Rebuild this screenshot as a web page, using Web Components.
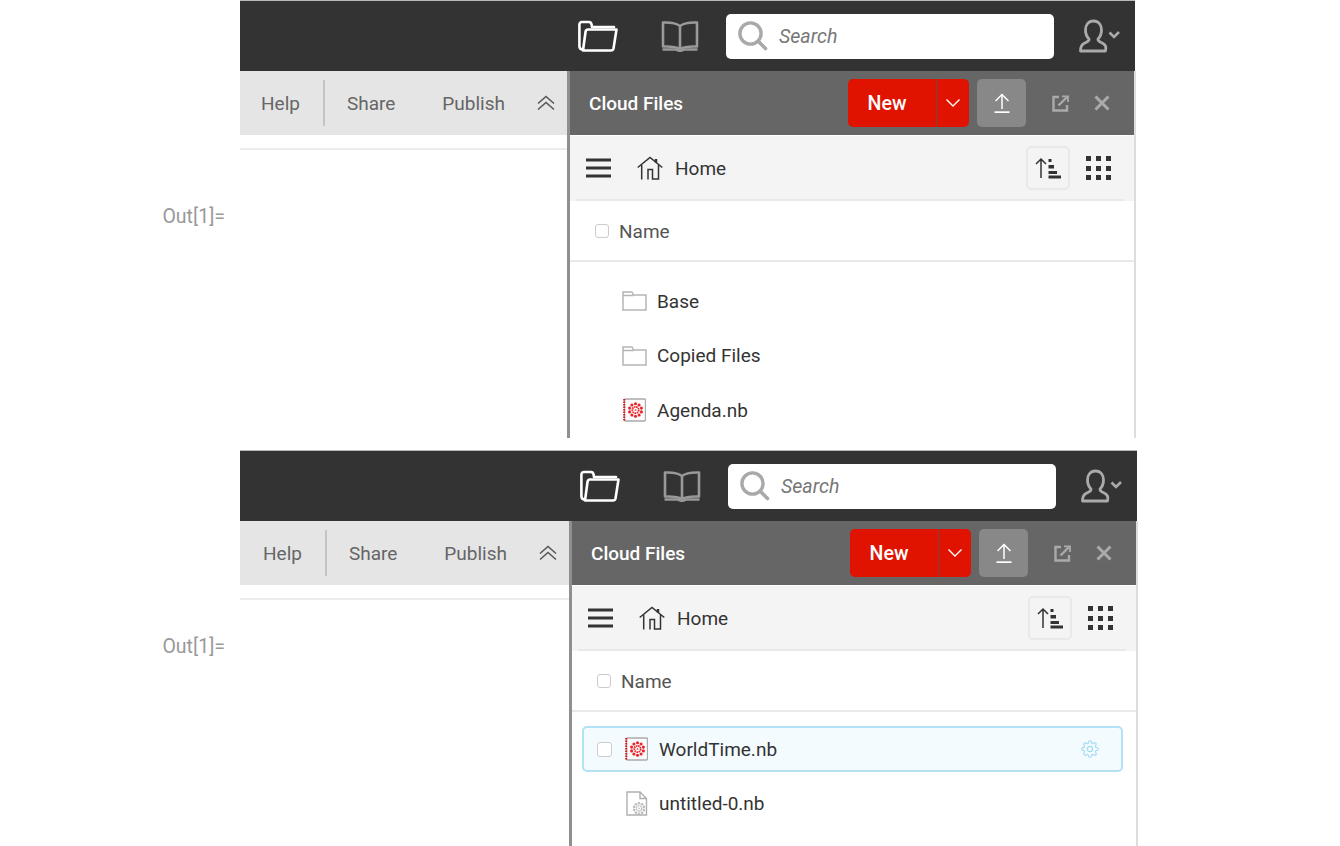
<!DOCTYPE html>
<html>
<head>
<meta charset="utf-8">
<title>Cloud Files</title>
<style>
  html, body { margin: 0; background: #fff; }
  body { font-family: Roboto, "Liberation Sans", sans-serif; }
  .stack { display: flex; flex-direction: column; gap: 12px; width: 1340px; height: 846px; overflow: hidden; }
</style>
</head>
<body>
<div class="stack">
  <wb-screen style="--total-w:1136px;--left-w:327px;--screen-h:438px;--out-top:205px;--list-top:16px">
    <wb-row-item kind="folder" label="Base"></wb-row-item>
    <wb-row-item kind="folder" label="Copied Files"></wb-row-item>
    <wb-row-item kind="notebook" label="Agenda.nb"></wb-row-item>
  </wb-screen>
  <wb-screen style="--total-w:1138px;--left-w:329px;--screen-h:396px;--out-top:185px;--list-top:14px">
    <wb-row-item kind="notebook" label="WorldTime.nb" selected></wb-row-item>
    <wb-row-item kind="draft" label="untitled-0.nb"></wb-row-item>
  </wb-screen>
</div>

<script>
// small base class: subclasses give html and css, shadow root gets filled once
class wbComponent extends HTMLElement {
  get html() { return `<slot></slot>`; }
  get css() { return `:host { display: block; }`; }

  constructor() {
    super();
    this.root = this.attachShadow({ mode: 'open' });
  }

  connectedCallback() {
    this.root.innerHTML = `<style>${this.css}</style>` + this.html;
  }
}

// the flake on notebook icons: a ring of petals round a broken inner ring
const flake = (cx, cy, r, color) => {
  let out = '';
  for (let i = 0; i < 10; i++) {
    const a = i * Math.PI / 5 + Math.PI / 10;
    const x = (cx + Math.cos(a) * r).toFixed(1);
    const y = (cy + Math.sin(a) * r).toFixed(1);
    out += `<circle cx="${x}" cy="${y}" r="${(r * 0.25).toFixed(2)}" fill="${color}"/>`;
  }
  const inner = (r * 0.52).toFixed(2);
  return out + `<circle cx="${cx}" cy="${cy}" r="${inner}" fill="none" stroke="${color}" stroke-width="${(r * 0.28).toFixed(2)}" stroke-dasharray="1.6 .6"/>
    <circle cx="${cx}" cy="${cy}" r="${(r * 0.14).toFixed(2)}" fill="${color}"/>`;
};

const ICONS = {
  files: [40, 32, `<g fill="none" stroke="#fff" stroke-width="2.6" stroke-linejoin="round" stroke-linecap="round">
    <path d="M4 29.5 Q1.4 29 1.4 26 V5 Q1.4 2 4 2 H11 Q13 2 13.6 4.5 L14 7 H36"/>
    <path d="M5 30.5 H33 Q35 30.5 35.5 28.5 L38.5 9.5 H10 Q8 9.5 7.6 11.5 L5 30.5 Z"/></g>`],
  book: [38, 32, `<g fill="none" stroke="#999" stroke-width="2.6" stroke-linejoin="round">
    <path d="M19 6 Q14 2 2 2.5 V26.5 Q14 26 19 29 Q24 26 36 26.5 V2.5 Q24 2 19 6 V29"/>
    <path d="M1.5 29.5 H15 Q19 32 23 29.5 H36.5"/></g>`],
  search: [30, 30, `<g fill="none" stroke="#a9a9a9"><circle cx="12.5" cy="12.5" r="10.6" stroke-width="3.4"/>
    <path d="M20.5 20.5 L27.5 27.5" stroke-width="3.6" stroke-linecap="round"/></g>`],
  user: [42, 34, `<path fill="none" stroke="#aaa" stroke-width="2.8" stroke-linejoin="round" d="M14.5 2 C9 2 6.5 6.5 6.5 11 C6.5 15 8 18 10 20 C10.5 22 8 23 5 24.5 C2 26 1.5 28 1.5 32 H26.5 C27.5 28 27 26 24 24.5 C21 23 18.5 22 19 20 C21 18 22.5 15 22.5 11 C22.5 6.5 20 2 14.5 2 Z"/>
    <path d="M30.5 13.5 L35 18 L40 13" fill="none" stroke="#aaa" stroke-width="2.6"/>`],
  chevrons: [20, 16, `<g fill="none" stroke="#555" stroke-width="1.5"><path d="M2 8.5 L10 1.5 L18 8.5"/><path d="M2 14.5 L10 7.5 L18 14.5"/></g>`],
  down: [16, 10, `<path d="M1.5 1.5 L8 8 L14.5 1.5" fill="none" stroke="#fff" stroke-width="1.4"/>`],
  upload: [16, 20, `<g fill="none" stroke="#fff" stroke-width="1.5"><path d="M8 1.5 V16"/><path d="M1.5 8 L8 1.5 L14.5 8"/><path d="M0.5 19.2 H15.5" stroke-width="1.8"/></g>`],
  external: [17, 17, `<g fill="none" stroke="#aaa" stroke-width="2.4"><path d="M7 2 H1.5 V15.5 H15 V10"/><path d="M6.5 10.5 L15 2"/><path d="M10 1.3 H16 V7" stroke-width="1.8"/></g>`],
  close: [16, 16, `<path d="M1.5 1.5 L14.5 14.5 M14.5 1.5 L1.5 14.5" stroke="#aaa" stroke-width="3"/>`],
  menu: [25, 20, `<path d="M0 2 H25 M0 10 H25 M0 18 H25" stroke="#333" stroke-width="3"/>`],
  home: [26, 24, `<g fill="none" stroke="#333" stroke-width="1.5"><path d="M0.7 11.5 L13 1.5 L25.3 11.5"/><path d="M19 3 V6.5" stroke-width="2.5"/><path d="M4.7 9 V23.5 M11 23.5 V13.5 H15.5 V23 H21.5 V9"/></g>`],
  sort: [26, 22, `<path d="M6 21 V2 M1 7 L6 2 L11 7" fill="none" stroke="#333" stroke-width="1.5"/>
    <path d="M13.5 2 H16.5 V5 H13.5 Z M13.5 8 H19 V11.5 H13.5 Z M13.5 14 H22 V17 H13.5 Z M13.5 18.5 H26 V21.5 H13.5 Z" fill="#333"/>`],
  grid: [26, 24, `<g fill="#333"><rect x="0" y="0" width="5" height="5"/><rect x="10" y="0" width="5" height="5"/><rect x="20" y="0" width="5" height="5"/>
    <rect x="0" y="10" width="5" height="5"/><rect x="10" y="10" width="5" height="5"/><rect x="20" y="10" width="5" height="5"/>
    <rect x="0" y="19" width="5" height="5"/><rect x="10" y="19" width="5" height="5"/><rect x="20" y="19" width="5" height="5"/></g>`],
  folder: [25, 20, `<path d="M1 19 V1 H10 L11.5 4 H24 V19 Z M1 4.5 H11.5" fill="#fff" stroke="#b5b5b5" stroke-width="1.5"/>`],
  notebook: [23, 24, `<rect x="1.5" y="1" width="21" height="22" rx="1" fill="#fbfbfb" stroke="#aaa" stroke-width="1.3"/>
    <path d="M1.2 1 V23" stroke="#dd1111" stroke-width="2" stroke-dasharray="1.5 1"/>${flake(12.5, 12, 6.2, '#e8242c')}`],
  draft: [23, 25, `<path d="M2 1 H15 L21.5 7.5 V24 H2 Z M15 1 V7.5 H21.5" fill="#fff" stroke="#b0b0b0" stroke-width="1.4"/>${flake(14, 17.5, 5.2, '#bdbdbd')}`],
  gear: [18, 18, `<g transform="scale(.75)" fill="none" stroke="#a6dcf2" stroke-width="1.6"><circle cx="12" cy="12" r="3.5"/>
    <path d="M19.4 15a1.65 1.65 0 0 0 .33 1.82l.06.06a2 2 0 0 1 0 2.83 2 2 0 0 1-2.83 0l-.06-.06a1.65 1.65 0 0 0-1.82-.33 1.65 1.65 0 0 0-1 1.51V21a2 2 0 0 1-2 2 2 2 0 0 1-2-2v-.09A1.65 1.65 0 0 0 9 19.4a1.65 1.65 0 0 0-1.82.33l-.06.06a2 2 0 0 1-2.83 0 2 2 0 0 1 0-2.83l.06-.06a1.65 1.65 0 0 0 .33-1.82 1.65 1.65 0 0 0-1.51-1H3a2 2 0 0 1-2-2 2 2 0 0 1 2-2h.09A1.65 1.65 0 0 0 4.6 9a1.65 1.65 0 0 0-.33-1.82l-.06-.06a2 2 0 0 1 0-2.83 2 2 0 0 1 2.83 0l.06.06a1.65 1.65 0 0 0 1.82.33H9a1.65 1.65 0 0 0 1-1.51V3a2 2 0 0 1 2-2 2 2 0 0 1 2 2v.09a1.65 1.65 0 0 0 1 1.51 1.65 1.65 0 0 0 1.82-.33l.06-.06a2 2 0 0 1 2.83 0 2 2 0 0 1 0 2.83l-.06.06a1.65 1.65 0 0 0-.33 1.82V9a1.65 1.65 0 0 0 1.51 1H21a2 2 0 0 1 2 2 2 2 0 0 1-2 2h-.09a1.65 1.65 0 0 0-1.51 1z"/></g>`]
};

class wbIcon extends wbComponent {
  get css() { return `:host { display: inline-flex; flex: none; } svg { display: block; }`; }
  get html() {
    const [w, h, body] = ICONS[this.getAttribute('name')];
    return `<svg width="${w}" height="${h}" viewBox="0 0 ${w} ${h}">${body}</svg>`;
  }
}

class wbTopbar extends wbComponent {
  get css() {
    return `
      :host { display: flex; align-items: center; justify-content: flex-end; height: 71px;
              background: #333; border-top: 1px solid #b8b8b8; box-sizing: border-box; padding-right: 14px; }
      .book { margin-left: 43px; }
      .search { margin-left: 27px; width: 328px; height: 45px; box-sizing: border-box; background: #fff;
                border-radius: 5px; display: flex; align-items: center; padding-left: 12px;
                font: italic 19.6px Roboto, sans-serif; color: #777; }
      .search span { margin-left: 11px; }
      .user { margin-left: 25px; }
    `;
  }
  get html() {
    return `
      <wb-icon name="files"></wb-icon>
      <wb-icon class="book" name="book"></wb-icon>
      <div class="search"><wb-icon name="search"></wb-icon><span>Search</span></div>
      <wb-icon class="user" name="user"></wb-icon>
    `;
  }
}

class wbNotebookBar extends wbComponent {
  get css() {
    return `
      :host { display: flex; align-items: center; justify-content: flex-end; height: 64px;
              background: #e5e5e5; color: #666; font-size: 19px; padding-right: 11px; }
      .sep { width: 2px; height: 46px; background: #c4c4c4; margin: 0 22px 0 23px; }
      .publish { margin-left: 47px; }
      wb-icon { margin-left: 31px; }
    `;
  }
  get html() {
    return `<span>Help</span><div class="sep"></div><span>Share</span>
      <span class="publish">Publish</span><wb-icon name="chevrons"></wb-icon>`;
  }
}

class wbPanelHeader extends wbComponent {
  get css() {
    return `
      :host { display: flex; align-items: center; height: 64px; background: #666; color: #fff;
              padding: 0 24px 0 19px; }
      .title { flex: 1; font-size: 19px; font-weight: 500; }
      .new { display: flex; height: 48px; border-radius: 5px; overflow: hidden; background: #e01300; font-size: 19.6px; }
      .new b { width: 88px; box-sizing: border-box; padding-right: 10px; display: flex; align-items: center; justify-content: center; font-weight: 500; }
      .new i { width: 33px; box-sizing: border-box; display: flex; align-items: center; justify-content: center; border-left: 1px solid #6b4a44; }
      .upload { width: 49px; height: 48px; margin-left: 8px; background: #888; border-radius: 5px;
                display: flex; align-items: center; justify-content: center; }
      .ext { margin-left: 26px; }
      .close { margin-left: 25px; }
    `;
  }
  get html() {
    return `
      <div class="title">Cloud Files</div>
      <div class="new"><b>New</b><i><wb-icon name="down"></wb-icon></i></div>
      <div class="upload"><wb-icon name="upload"></wb-icon></div>
      <wb-icon class="ext" name="external"></wb-icon>
      <wb-icon class="close" name="close"></wb-icon>
    `;
  }
}

class wbPathBar extends wbComponent {
  get css() {
    return `
      :host { display: block; background: #f4f4f4; margin-top: 1px; }
      .row { display: flex; align-items: center; height: 63px; margin: 0 10px 0 6px; padding: 0 12px 0 10px;
             border-bottom: 2px solid #e9e9e9; color: #333; font-size: 19px; }
      .home { margin-left: 26px; }
      .label { margin-left: 12px; padding-top: 2px; flex: 1; }
      .sort { width: 44px; height: 44px; box-sizing: border-box; border: 2px solid #e9e9e9; border-radius: 5px;
              display: flex; align-items: center; justify-content: center; }
      .grid { margin-left: 16px; }
    `;
  }
  get html() {
    return `<div class="row">
      <wb-icon name="menu"></wb-icon><wb-icon class="home" name="home"></wb-icon>
      <span class="label">Home</span>
      <div class="sort"><wb-icon name="sort"></wb-icon></div>
      <wb-icon class="grid" name="grid"></wb-icon>
    </div>`;
  }
}

class wbCheck extends wbComponent {
  get css() {
    return `:host { display: block; flex: none; width: var(--check, 14px); height: var(--check, 14px); box-sizing: border-box;
            border: 1.5px solid #ccc; border-radius: 3px; background: #fff; }`;
  }
  get html() { return ``; }
}

class wbRowItem extends wbComponent {
  get css() {
    return `
      :host { display: flex; align-items: center; height: 46px; box-sizing: border-box; margin: 0 13px 0 10px;
              padding-left: 40px; padding-right: 22px; border: 2px solid transparent; border-radius: 5px;
              color: #333; font-size: 19px; }
      :host([selected]) { background: #f3fbff; border-color: #b4e2f5; padding-left: 13px; --check: 15px; }
      wb-check { margin-right: 12px; }
      .ico { width: 24px; display: flex; justify-content: center; }
      .label { margin-left: 11px; flex: 1; }
    `;
  }
  get html() {
    const selected = this.hasAttribute('selected');
    return `${selected ? '<wb-check></wb-check>' : ''}
      <span class="ico"><wb-icon name="${this.getAttribute('kind')}"></wb-icon></span>
      <span class="label">${this.getAttribute('label')}</span>
      ${selected ? '<wb-icon name="gear"></wb-icon>' : ''}`;
  }
}

class wbCloudPanel extends wbComponent {
  get css() {
    return `
      :host { display: block; border-right: 2px solid #ddd; min-width: 0; overflow: hidden; }
      .names { display: flex; align-items: center; height: 59px; border-bottom: 2px solid #e9e9e9;
               padding-left: 25px; color: #555; font-size: 19px; }
      .names span { margin-left: 10px; padding-top: 1px; }
      .list { display: flex; flex-direction: column; gap: 8.5px; padding-top: var(--list-top); }
    `;
  }
  get html() {
    return `<wb-panel-header></wb-panel-header><wb-path-bar></wb-path-bar>
      <div class="names"><wb-check></wb-check><span>Name</span></div>
      <div class="list"><slot></slot></div>`;
  }
}

class wbScreen extends wbComponent {
  get css() {
    return `
      :host { display: grid; grid-template-columns: 240px var(--left-w) 3px 1fr; grid-template-rows: 71px 1fr;
              width: var(--total-w); height: var(--screen-h); flex: none; overflow: hidden; }
      .out { grid-row: 1 / span 2; text-align: right; padding: var(--out-top) 15px 0 0; color: #999; font-size: 19.5px; line-height: 24px; }
      wb-topbar { grid-column: 2 / span 3; margin-right: 1px; }
      .note { grid-column: 2; }
      .rule { height: 2px; background: #ececec; margin-top: 13px; }
      .divider { grid-column: 3; background: #8f8f8f; }
      wb-cloud-panel { grid-column: 4; }
    `;
  }
  get html() {
    return `
      <div class="out">Out[1]=</div>
      <wb-topbar></wb-topbar>
      <div class="note"><wb-notebook-bar></wb-notebook-bar><div class="rule"></div></div>
      <div class="divider"></div>
      <wb-cloud-panel><slot></slot></wb-cloud-panel>
    `;
  }
}

customElements.define('wb-icon', wbIcon);
customElements.define('wb-check', wbCheck);
customElements.define('wb-topbar', wbTopbar);
customElements.define('wb-notebook-bar', wbNotebookBar);
customElements.define('wb-panel-header', wbPanelHeader);
customElements.define('wb-path-bar', wbPathBar);
customElements.define('wb-row-item', wbRowItem);
customElements.define('wb-cloud-panel', wbCloudPanel);
customElements.define('wb-screen', wbScreen);
</script>
</body>
</html>
